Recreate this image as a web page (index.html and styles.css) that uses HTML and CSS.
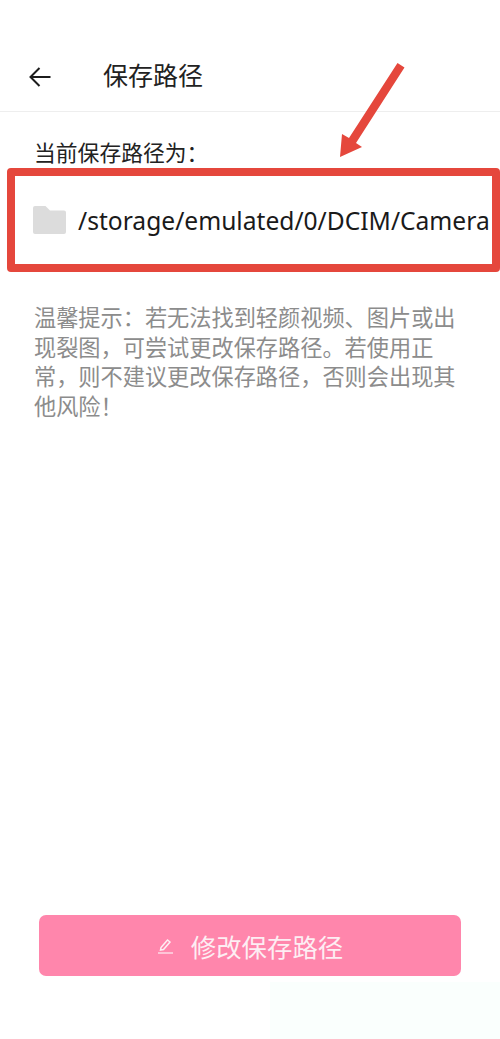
FILE: index.html
```html
<!DOCTYPE html>
<html lang="zh-CN">
<head>
<meta charset="utf-8">
<title>保存路径</title>
<link rel="stylesheet" href="styles.css">
</head>
<body>
<div class="page">
  <header class="topbar">
    <svg class="back" width="22" height="20" viewBox="0 0 22 20"><path d="M21.500 10H1.500M10.500 1L1.500 10L10.500 19" fill="none" stroke="#1c1c1c" stroke-width="2"/></svg>
    <h1 class="title">保存路径</h1>
  </header>
  <p class="label">当前保存路径为&#xFF1A;</p>
  <div class="path-box">
    <svg class="folder" width="33" height="28" viewBox="0 0 33 28"><path d="M2 0H12.500L17 4.500H31A2 2 0 0 1 33 6.500V26A2 2 0 0 1 31 28H2A2 2 0 0 1 0 26V2A2 2 0 0 1 2 0Z" fill="#dcdcdc"/></svg>
    <span class="path">/storage/emulated/0/DCIM/Camera</span>
  </div>
  <p class="tip">温馨提示&#xFF1A;若无法找到轻颜视频、图片或出<br>现裂图&#xFF0C;可尝试更改保存路径。若使用正<br>常&#xFF0C;则不建议更改保存路径&#xFF0C;否则会出现其<br>他风险&#xFF01;</p>
  <div class="action">
    <button class="btn" type="button">
      <svg class="pen" width="17" height="17" viewBox="0 0 17 17"><path d="M4 10.500L10.500 3L13 5L6.500 12.500L3.500 13Z" fill="none" stroke="#fdeef3" stroke-width="1.500"/><path d="M1 16H16" stroke="#fdeef3" stroke-width="1.200"/></svg>
      <span>修改保存路径</span>
    </button>
  </div>
  <div class="tint"></div>
  <svg class="arrow" width="70" height="100" viewBox="0 0 70 100"><path d="M57.500 3L64.500 7.500L16 83L22 87L0 97L2 74L9 78Z" fill="#e5473c"/></svg>
</div>
</body>
</html>
```
FILE: styles.css
```css
* { box-sizing: border-box; }
html, body { margin: 0; padding: 0; background: #fff; }
.page {
  position: relative;
  display: flex;
  flex-direction: column;
  width: 500px;
  height: 1039px;
  overflow: hidden;
  font-family: "Noto Sans CJK SC", "Noto Sans", sans-serif;
}
.topbar {
  display: flex;
  align-items: center;
  height: 112px;
  padding: 43px 0 0 29px;
  border-bottom: 1px solid #eeeeee;
}
.back { flex: none; }
.title {
  margin: 0 0 6px 52px;
  font-size: 25px;
  font-weight: 400;
  line-height: 34px;
  color: #222;
}
.label {
  margin: 25px 0 0 34px;
  font-size: 21.800px;
  line-height: 30px;
  color: #222;
}
.path-box {
  display: flex;
  align-items: center;
  gap: 12px;
  width: 493px;
  height: 104px;
  margin: 1px 0 0 7px;
  padding-left: 18px;
  border: 8px solid #e5473c;
  border-radius: 4px;
  white-space: nowrap;
}
.folder { flex: none; }
.path {
  font-family: "Noto Sans", sans-serif;
  font-size: 24.600px;
  color: #1a1a1a;
}
.tip {
  margin: 30px 0 0 34px;
  font-size: 22.200px;
  line-height: 29.600px;
  color: #8c8c8c;
}
.action {
  margin-top: auto;
  padding: 0 39px 63px;
}
.btn {
  display: flex;
  align-items: center;
  justify-content: center;
  gap: 17px;
  width: 100%;
  height: 61px;
  border: 0;
  border-radius: 7px;
  background: #ff86ac;
  color: #fdeef3;
  font: inherit;
  font-size: 25.400px;
}
.tint {
  position: absolute;
  left: 270px;
  bottom: 0;
  width: 230px;
  height: 57px;
  background: #fafffd;
}
.arrow {
  position: absolute;
  left: 340px;
  top: 60px;
}
```
